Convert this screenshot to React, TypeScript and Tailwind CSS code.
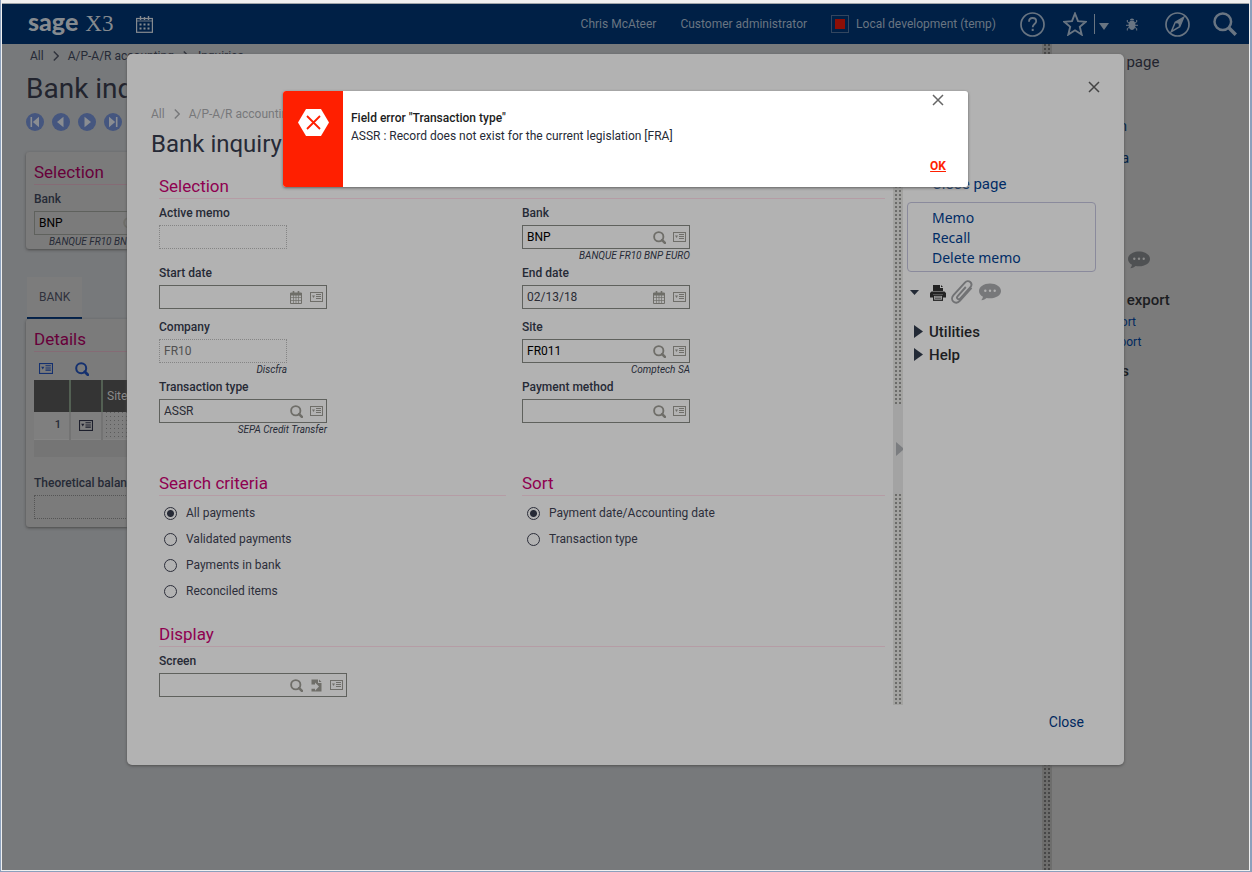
import React, { useId } from "react";

type Glyph = "search" | "calendar" | "jump" | "list";

function ListIcon({ className = "h-[10px] w-[13px]" }: { className?: string }) {
  return (
    <svg viewBox="0 0 13 10" className={className} fill="none" stroke="currentColor" preserveAspectRatio="none" aria-hidden="true">
      <rect x="0.5" y="0.5" width="12" height="9" />
      <path d="M6 2.500h5M6 4.500h5M6 6.500h5" />
      <path d="M2 3.500h3L3.500 6z" fill="currentColor" stroke="none" />
    </svg>
  );
}

function SearchIcon({ className = "size-[13px]" }: { className?: string }) {
  return (
    <svg viewBox="0 0 14 14" className={className} fill="none" stroke="currentColor" aria-hidden="true">
      <circle cx="6.2" cy="6.2" r="5" strokeWidth="2" />
      <path d="M9.8 9.8l3 3" strokeWidth="2.800" strokeLinecap="round" />
    </svg>
  );
}

function CalendarIcon() {
  return (
    <svg viewBox="0 0 12 13" className="h-[13px] w-[12px]" fill="none" stroke="currentColor" aria-hidden="true">
      <path d="M0.5 3.5h11v9h-11z" />
      <path d="M0.5 2h11v2h-11z" fill="currentColor" />
      <path d="M3.5 0v3M8.500 0v3" strokeWidth="1.6" />
      <path d="M3.5 4v9M6 4v9M8.5 4v9M0.500 6.500h11M0.500 9.500h11" strokeWidth="0.7" />
    </svg>
  );
}

function JumpIcon() {
  return (
    <svg viewBox="0 0 11 13" className="h-[13px] w-[11px]" aria-hidden="true">
      <path d="M0.500 0.500H7V4h3.500v8.500h-10V9.800H4v2L8 7.500 4 3.500v2H0.500z" fill="currentColor" />
      <path d="M8 0.500L10.500 3H8z" fill="currentColor" />
    </svg>
  );
}

const glyphNames: Record<Glyph, string> = {
  search: "Search",
  calendar: "Calendar",
  jump: "Jump to",
  list: "Actions",
};

function FieldGlyph({ kind }: { kind: Glyph }) {
  return (
    <button type="button" aria-label={glyphNames[kind]} className="flex w-5 shrink-0 items-center justify-center">
      {kind === "search" && <SearchIcon />}
      {kind === "calendar" && <CalendarIcon />}
      {kind === "jump" && <JumpIcon />}
      {kind === "list" && <ListIcon />}
    </button>
  );
}

type FieldProps = {
  label: string;
  value?: string;
  note?: string;
  icons?: Glyph[];
  width?: string;
  color?: string;
};

function Field({ label, value = "", note, icons = [], width = "w-[168px]", color = "text-[#2a2c35]" }: FieldProps) {
  const id = useId();
  const readOnly = icons.length === 0;
  return (
    <div className="flex flex-col">
      <label htmlFor={id} className="mb-1 text-xs font-medium leading-4 text-[#262a36]">
        {label}
      </label>
      <div className={`${width} ${readOnly ? "border-dotted border-[#858585]" : "border-[#5f615d]"} flex h-6 border text-[#6f6e69]`}>
        <input
          id={id}
          defaultValue={value}
          readOnly={readOnly}
          className={`${color} min-w-0 flex-1 bg-transparent pl-1 text-xs outline-none`}
        />
        {icons.map((k) => (
          <FieldGlyph key={k} kind={k} />
        ))}
      </div>
      <div className={`${width} flex min-h-[6px] justify-end`}>
        {note && <span className="h-3 whitespace-nowrap text-[10px] italic leading-[14px] text-[#262a36]">{note}</span>}
      </div>
    </div>
  );
}

function SectionTitle({ children }: { children: React.ReactNode }) {
  return (
    <h2 className="h-[25px] border-b border-[#b59ca5] text-[17px] leading-6 text-[#8f0050]">{children}</h2>
  );
}

function Radio({ name, label, checked }: { name: string; label: string; checked?: boolean }) {
  return (
    <label className="flex h-[26px] items-center gap-[9px] pl-[5px] text-xs text-[#2c2e3a]">
      <input
        type="radio"
        name={name}
        defaultChecked={checked}
        className="size-[13px] appearance-none rounded-full border border-[#2c2e3a] checked:bg-[radial-gradient(circle,#262a36_3px,transparent_4px)]"
      />
      {label}
    </label>
  );
}

function Splitter({ tone }: { tone: "light" | "dark" }) {
  const dots =
    tone === "light"
      ? "bg-[conic-gradient(#6c6c6a_25%,#a3a3a1_0)]"
      : "bg-[conic-gradient(#474747_25%,#6d6d6c_0)]";
  return (
    <div className={`${dots} flex w-[10px] shrink-0 flex-col bg-[length:4px_4px]`}>
      {tone === "light" && (
        <div className="mt-[230px] flex h-[90px] items-center justify-end bg-[#a3a3a3]">
          <svg viewBox="0 0 7 14" className="h-[14px] w-[7px] text-[#7b7d80]" aria-hidden="true">
            <path d="M0 0l7 6v2l-7 6z" fill="currentColor" />
          </svg>
        </div>
      )}
    </div>
  );
}

function Chevron({ className = "text-[#30333c]" }: { className?: string }) {
  return (
    <svg viewBox="0 0 6 10" className={`${className} mx-[9px] h-[10px] w-[6px]`} fill="none" stroke="currentColor" strokeWidth="1.4" aria-hidden="true">
      <path d="M0.800 0.600l4.400 4.400-4.400 4.400" />
    </svg>
  );
}

function CloseIcon() {
  return (
    <svg viewBox="0 0 12 12" className="size-3" fill="none" stroke="currentColor" strokeWidth="1.500" aria-hidden="true">
      <path d="M1 1l10 10M11 1l-10 10" />
    </svg>
  );
}

function CommentIcon({ back }: { back: string }) {
  return (
    <svg viewBox="0 0 22 18" className="h-[18px] w-[22px]" aria-hidden="true">
      <path d="M11 0.500c6.100 0 11 3.200 11 7.500s-4.900 7.300-11 7.300c-1.200 0-2.300-.1-3.400-.3-1.300 1.200-3 2.100-5.300 2.200.9-.9 1.500-2.100 1.700-3.400C1.600 12.500 0 10.400 0 8c0-4.300 4.900-7.500 11-7.500z" fill="currentColor" />
      <g fill={back}>
        <circle cx="6.300" cy="7.800" r="1.200" />
        <circle cx="11" cy="7.800" r="1.200" />
        <circle cx="15.700" cy="7.800" r="1.200" />
      </g>
    </svg>
  );
}

function TwistLink({ children }: { children: React.ReactNode }) {
  return (
    <button type="button" className="flex h-[23px] items-center gap-[6px] pl-[11px] text-[15px] font-medium leading-5 text-[#1c1d22]">
      <svg viewBox="0 0 9 13" className="h-[13px] w-[9px]" aria-hidden="true">
        <path d="M0 0l9 6.500-9 6.500z" fill="#232a36" />
      </svg>
      {children}
    </button>
  );
}

function NavButton({ kind }: { kind: "first" | "prev" | "next" | "last" }) {
  const flip = kind === "next" || kind === "last";
  const edge = kind === "first" || kind === "last";
  return (
    <button type="button" aria-label={kind} className="size-[18px]">
      <svg viewBox="0 0 18 18" className="size-[18px]" aria-hidden="true">
        <circle cx="9" cy="9" r="9" fill="#45567f" />
        <g transform={flip ? "matrix(-1 0 0 1 18 0)" : undefined}>
          <path d={edge ? "M13 3.800v10.400L6.800 9z" : "M11.500 3.800v10.400L5 9z"} fill="#8a8d92" />
          {edge && <path d="M5.300 4v10" stroke="#8a8d92" strokeWidth="1.600" />}
        </g>
      </svg>
    </button>
  );
}

function Header() {
  return (
    <header className="flex h-10 shrink-0 items-center bg-[#002046] text-xs text-[#697582]">
      <a href="#home" className="flex items-baseline gap-[7px] pb-[3px] pl-[26px] text-[#858a8f]">
        <span className="font-[Lato,sans-serif] text-[25px] font-black leading-8">sage</span>
        <span className="font-['Liberation_Serif',serif] text-[23px] leading-8">X3</span>
      </a>
      <button type="button" aria-label="Calendar" className="ml-[23px] text-[#858a8f]">
        <svg viewBox="0 0 17 17" className="size-[17px]" fill="none" stroke="currentColor" aria-hidden="true">
          <rect x="0.600" y="2.500" width="15.800" height="13.800" strokeWidth="1.200" />
          <path d="M1 5h15" strokeWidth="0.800" />
          <path d="M4.500 0v4M12.500 0v4M8.500 1v3" strokeWidth="1.400" />
          <path d="M3.500 8.500h2M7.500 8.500h2M11.500 8.500h2M3.500 12.500h2M7.500 12.500h2M11.500 12.500h2" strokeWidth="2" />
        </svg>
      </button>
      <div className="ml-auto flex items-center pr-3">
        <button type="button">Chris McAteer</button>
        <button type="button" className="ml-6">Customer administrator</button>
        <button type="button" className="ml-6 flex items-center gap-[7px]">
          <span className="flex size-[18px] items-center justify-center border border-[#33465f]">
            <span className="size-[10px] bg-[#8c0f06]" />
          </span>
          Local development (temp)
        </button>
        <button type="button" aria-label="Help" className="ml-6">
          <svg viewBox="0 0 25 25" className="size-[25px]" fill="none" stroke="currentColor" aria-hidden="true">
            <circle cx="12.500" cy="12.500" r="11.500" strokeWidth="1.700" />
            <path d="M9 9.700c0-2.300 1.500-3.700 3.600-3.700s3.600 1.300 3.600 3.200c0 2.700-3.500 3-3.500 6" strokeWidth="1.800" />
            <path d="M12.700 16.800v2.200" strokeWidth="2" />
          </svg>
        </button>
        <button type="button" aria-label="Favorites" className="ml-[18px]">
          <svg viewBox="0 0 24 24" className="size-[24px]" fill="none" stroke="currentColor" strokeWidth="1.900" aria-hidden="true">
            <path d="M12 1.500l3 7.700 7.700.6-5.900 5 1.900 7.800-6.700-4.300-6.700 4.300 1.900-7.800-5.900-5 7.700-.6z" />
          </svg>
        </button>
        <span className="ml-[7px] h-5 w-px bg-current" />
        <button type="button" aria-label="Favorites menu" className="ml-1 pt-[5px]">
          <svg viewBox="0 0 10 7" className="h-[7px] w-[10px]" aria-hidden="true">
            <path d="M0 0h10l-5 7z" fill="currentColor" />
          </svg>
        </button>
        <button type="button" aria-label="Debug" className="ml-[17px]">
          <svg viewBox="0 0 12 13" className="h-[13px] w-[12px]" fill="none" stroke="currentColor" aria-hidden="true">
            <path d="M6 2.600c2.300 0 3.400 1.800 3.400 4.400s-1.100 5-3.400 5-3.400-2.400-3.400-5 1.100-4.400 3.400-4.400z" fill="currentColor" stroke="none" />
            <path d="M3.800 2.300c0-1.100 1-1.900 2.200-1.900s2.200.8 2.200 1.900z" fill="currentColor" stroke="none" />
            <path d="M3 5L1.300 4V2M9 5l1.700-1V2M0 7.300h12M3 9.500L1.300 10.500v2M9 9.500l1.700 1v2" />
          </svg>
        </button>
        <button type="button" aria-label="Navigation" className="ml-[27px]">
          <svg viewBox="0 0 25 25" className="size-[25px]" fill="none" stroke="currentColor" aria-hidden="true">
            <circle cx="12.500" cy="12.500" r="11.500" strokeWidth="1.700" />
            <path d="M18.700 5.300l-4 9.400-8.400 5 4-9.400z" strokeWidth="1.500" />
            <path d="M18.700 5.300l-4 9.400-4.400-4.400z" fill="currentColor" stroke="none" />
            <circle cx="12.300" cy="12.700" r="1.500" fill="#002046" stroke="none" />
          </svg>
        </button>
        <button type="button" aria-label="Search" className="ml-[23px]">
          <svg viewBox="0 0 24 24" className="size-[24px]" fill="none" stroke="currentColor" aria-hidden="true">
            <circle cx="9.800" cy="9.800" r="8.300" strokeWidth="2.500" />
            <path d="M15.800 15.800l7 7" strokeWidth="3.400" />
          </svg>
        </button>
      </div>
    </header>
  );
}

function BackgroundMain() {
  return (
    <main className="flex min-w-0 flex-1 flex-col bg-[#77797b] px-6 pt-1 text-[#262a36]">
      <nav aria-label="Breadcrumb" className="flex h-4 items-center pl-1 text-xs">
        All
        <Chevron />
        A/P-A/R accounting
        <Chevron />
        Inquiries
      </nav>
      <h1 className="mt-[5px] h-10 text-[28px] leading-10 text-[#22242e]">Bank inquiry</h1>
      <div className="mt-1 flex gap-2">
        <NavButton kind="first" />
        <NavButton kind="prev" />
        <NavButton kind="next" />
        <NavButton kind="last" />
      </div>

      <section className="mt-[21px] rounded-[3px] bg-[#7b7b7b] px-2 pb-0.5 pt-2 shadow-[0_1px_3px_#4a4a4a]">
        <h2 className="h-[25px] border-b border-[#856b75] text-[17px] leading-6 text-[#67003a]">Selection</h2>
        <div className="pt-[6px]">
          <Field label="Bank" value="BNP" note="BANQUE FR10 BNP EURO" icons={["search", "list"]} width="w-[126px]" color="text-black" />
        </div>
      </section>

      <div className="mt-7 flex">
        <button type="button" className="ml-px h-[42px] border-b-2 border-[#00204a] bg-[#7c7c7c] px-3 text-xs text-[#30323c]">
          BANK
        </button>
      </div>

      <section className="rounded-[3px] bg-[#7b7b7b] px-2 pb-[2px] pt-2 shadow-[0_1px_3px_#4a4a4a]">
        <h2 className="h-[25px] border-b border-[#856b75] text-[17px] leading-6 text-[#67003a]">Details</h2>
        <div className="flex h-[28px] items-center gap-[22px] pl-[5px] pt-[5px] text-[#14306f]">
          <button type="button" aria-label="Actions"><ListIcon className="h-[11px] w-[14px]" /></button>
          <button type="button" aria-label="Search"><SearchIcon className="size-[14px]" /></button>
        </div>
        <table className="w-full table-fixed border-collapse text-xs">
          <thead>
            <tr className="h-8 bg-[#343434] text-left text-[#8b8b8b]">
              <th className="w-9 border-r-2 border-[#536053]" aria-label="Row" />
              <th className="w-8 border-r-2 border-[#536053]" aria-label="Menu" />
              <th className="pl-1 font-normal">Site</th>
            </tr>
          </thead>
          <tbody>
            <tr className="h-[27px]">
              <td className="border-r-2 border-[#737373] bg-[#7f7f7f] pr-2 text-right text-[11px] font-medium">1</td>
              <td className="border-r-2 border-[#737373] bg-[#7f7f7f] text-[#1d1f2c]">
                <button type="button" aria-label="Row actions" className="flex w-full justify-center">
                  <ListIcon className="h-[11px] w-[14px]" />
                </button>
              </td>
              <td className="bg-[conic-gradient(at_3px_1px,#5c5c5c_25%,#7f7f7f_0)] bg-[length:4px_4px]" />
            </tr>
            <tr className="h-[18px] border-t border-[#848484] bg-[#757575]">
              <td colSpan={3} />
            </tr>
          </tbody>
        </table>
        <div className="pt-[18px] [&_div]:border-[#555]">
          <Field label="Theoretical balance" width="w-[168px]" />
        </div>
      </section>
    </main>
  );
}

function BackgroundSidebar() {
  return (
    <aside className="flex w-[197px] shrink-0 flex-col bg-[#7b7b7b] pt-2 text-sm text-[#001f46]">
      <button type="button" className="h-5 pl-[33px] text-left text-[15px] text-[#22242e]">Close page</button>
      <div className="mt-11 flex flex-col items-start gap-3 pl-8">
        <button type="button" className="h-5">Search</button>
        <button type="button" className="h-5">Criteria</button>
      </div>
      <div className="mt-[83px] flex h-[18px] pl-[76px] text-[#4f5153]">
        <button type="button" aria-label="Comments"><CommentIcon back="#8a8a8a" /></button>
      </div>
      <div className="mt-[19px] flex flex-col items-start">
        <TwistLink>Import export</TwistLink>
        <div className="flex flex-col items-start pl-6 pt-px text-xs leading-5 text-[#00285f]">
          <a href="#text">Text export</a>
          <a href="#excel">Excel export</a>
        </div>
        <div className="mt-[7px] flex flex-col">
          <TwistLink>Utilities</TwistLink>
          <TwistLink>Help</TwistLink>
        </div>
      </div>
    </aside>
  );
}

function Dialog() {
  return (
    <div role="dialog" aria-label="Bank inquiry" className="relative w-full rounded-[5px] bg-[#b2b2b2] pt-[51px] shadow-[0_1px_3px_#505050]">
      <button type="button" aria-label="Close dialog" className="absolute right-6 top-[27px] text-[#444]">
        <CloseIcon />
      </button>
      <div className="pl-6">
        <nav aria-label="Dialog breadcrumb" className="flex h-[18px] items-center text-xs text-[#77787a]">
          All
          <Chevron className="text-[#77787a]" />
          A/P-A/R accounting
          <Chevron className="text-[#77787a]" />
          Inquiries
        </nav>
        <h1 className="mt-[5px] h-8 text-[24px] leading-8 text-[#262a36]">Bank inquiry</h1>
      </div>

      <div className="mt-[14px] flex">
        <form className="flex min-w-0 flex-1 flex-col pb-0.5 pl-8 pr-2">
          <SectionTitle>Selection</SectionTitle>
          <div className="grid grid-cols-2 gap-y-1 pt-[6px]">
            <Field label="Active memo" width="w-[128px]" />
            <Field label="Bank" value="BNP" note="BANQUE FR10 BNP EURO" icons={["search", "list"]} color="text-black" />
            <Field label="Start date" icons={["calendar", "list"]} />
            <Field label="End date" value="02/13/18" icons={["calendar", "list"]} />
            <Field label="Company" value="FR10" note="Discfra" width="w-[128px]" color="text-[#515151]" />
            <Field label="Site" value="FR011" note="Comptech SA" icons={["search", "list"]} color="text-black" />
            <Field label="Transaction type" value="ASSR" note="SEPA Credit Transfer" icons={["search", "list"]} />
            <Field label="Payment method" icons={["search", "list"]} />
          </div>
          <div className="mt-9 grid grid-cols-2">
            <div className="pr-4">
              <SectionTitle>Search criteria</SectionTitle>
              <div className="pt-1">
                <Radio name="criteria" label="All payments" checked />
                <Radio name="criteria" label="Validated payments" />
                <Radio name="criteria" label="Payments in bank" />
                <Radio name="criteria" label="Reconciled items" />
              </div>
            </div>
            <div>
              <SectionTitle>Sort</SectionTitle>
              <div className="pt-1">
                <Radio name="sort" label="Payment date/Accounting date" checked />
                <Radio name="sort" label="Transaction type" />
              </div>
            </div>
          </div>
          <div className="mt-[18px]">
            <SectionTitle>Display</SectionTitle>
            <div className="pt-[6px]">
              <Field label="Screen" icons={["search", "jump", "list"]} width="w-[188px]" />
            </div>
          </div>
        </form>

        <Splitter tone="light" />

        <aside className="flex w-[221px] shrink-0 flex-col text-[15px] text-[#002c66]">
          <button type="button" className="h-5 pl-[29px] text-left leading-5">Close page</button>
          <div className="ml-1 mr-7 mt-2 flex flex-col items-start rounded-[4px] border border-[#8a8a9c] pb-[3px] pl-6 pt-[5px] font-['Noto_Sans',sans-serif] text-[14px]">
            <button type="button" className="h-5 leading-5">Memo</button>
            <button type="button" className="h-5 leading-5">Recall</button>
            <button type="button" className="h-5 leading-5">Delete memo</button>
          </div>
          <div className="mt-2 flex h-6 items-center pl-[7px] text-[#232a36]">
            <button type="button" aria-label="More">
              <svg viewBox="0 0 9 5" className="h-[5px] w-[9px]" aria-hidden="true"><path d="M0 0h9l-4.500 5z" fill="currentColor" /></svg>
            </button>
            <button type="button" aria-label="Print" className="ml-[11px] pt-0.5">
              <svg viewBox="0 0 16 16" className="size-4" aria-hidden="true">
                <path d="M3 0h7v3h3v3H3z" fill="#232323" />
                <path d="M11 0l2 2h-2z" fill="#232323" />
                <path d="M1.500 6.500h13l1.500 1.500v4.500h-3V9.500H3v3H0V8z" fill="#232323" />
                <rect x="3.600" y="10.300" width="8.800" height="5" fill="none" stroke="#232323" strokeWidth="1.200" />
                <path d="M5 12h6M5 13.700h6" stroke="#232323" strokeWidth="0.700" />
              </svg>
            </button>
            <button type="button" aria-label="Attachments" className="ml-[5px] text-[#717274]">
              <svg viewBox="0 0 22 24" className="h-6 w-[22px]" fill="none" stroke="currentColor" strokeWidth="1.900" aria-hidden="true">
                <path d="M14.800 7l-8.300 9.300a1.800 1.800 0 0 0 2.700 2.400l10-11.200c3.500-4-1.700-8.900-5.300-4.900L2.500 15.200c-4.300 4.800 2 10.500 6.300 5.700l11.700-13" />
              </svg>
            </button>
            <button type="button" aria-label="Comments" className="ml-[6px] text-[#77787a]">
              <CommentIcon back="#b2b2b2" />
            </button>
          </div>
          <div className="mt-4 flex flex-col">
            <TwistLink>Utilities</TwistLink>
            <TwistLink>Help</TwistLink>
          </div>
        </aside>
      </div>

      <div className="flex justify-end pb-[33px] pr-10 pt-[7px]">
        <button type="button" className="text-sm leading-5 text-[#00285f]">Close</button>
      </div>
    </div>
  );
}

function ErrorToast() {
  return (
    <div role="alert" className="relative flex h-24 w-full max-w-[685px] overflow-hidden rounded-[3px] bg-white text-xs text-[#262a36]">
      <div className="flex w-[60px] shrink-0 justify-center bg-[#ff1f00] pt-[18px]">
        <svg viewBox="0 0 31 27" className="h-[27px] w-[31px]" aria-hidden="true">
          <path d="M8 0h15l8 13.500-8 13.500H8L0 13.500z" fill="#fff" />
          <path d="M9 7l13 13M22 7L9 20" stroke="#ff1f00" strokeWidth="1.800" />
        </svg>
      </div>
      <div className="flex-1 pl-2 pt-[18px] leading-[18px]">
        <p className="font-medium text-[#1c1d22]">Field error "Transaction type"</p>
        <p>ASSR : Record does not exist for the current legislation [FRA]</p>
      </div>
      <div className="flex flex-col items-end justify-between pb-3 pr-[22px] pt-[3px]">
        <button type="button" aria-label="Dismiss" className="mr-[2px] text-[#666]"><CloseIcon /></button>
        <button type="button" className="font-bold leading-[18px] text-[#ff1f00] underline">OK</button>
      </div>
    </div>
  );
}

export default function App() {
  return (
    <div className="flex min-h-screen flex-col bg-[#8ba0bc] pb-px pl-px pr-[2px] font-[Roboto,sans-serif] leading-4">
      <div className="flex flex-1 flex-col bg-[#f0f0f0] pb-px pl-px pr-px pt-[3px]">
        <div className="relative flex flex-1 flex-col border-t border-[#a0a4a8]">
          <Header />
          <div className="flex flex-1">
            <BackgroundMain />
            <Splitter tone="dark" />
            <BackgroundSidebar />
          </div>
          <div className="absolute inset-x-0 top-[50px] flex px-[125px]">
            <Dialog />
          </div>
          <div className="absolute inset-x-0 top-[87px] flex justify-center">
            <div className="flex w-full max-w-[685px] rounded-[3px] shadow-[0_1px_3px_#606060]">
              <ErrorToast />
            </div>
          </div>
        </div>
      </div>
    </div>
  );
}
